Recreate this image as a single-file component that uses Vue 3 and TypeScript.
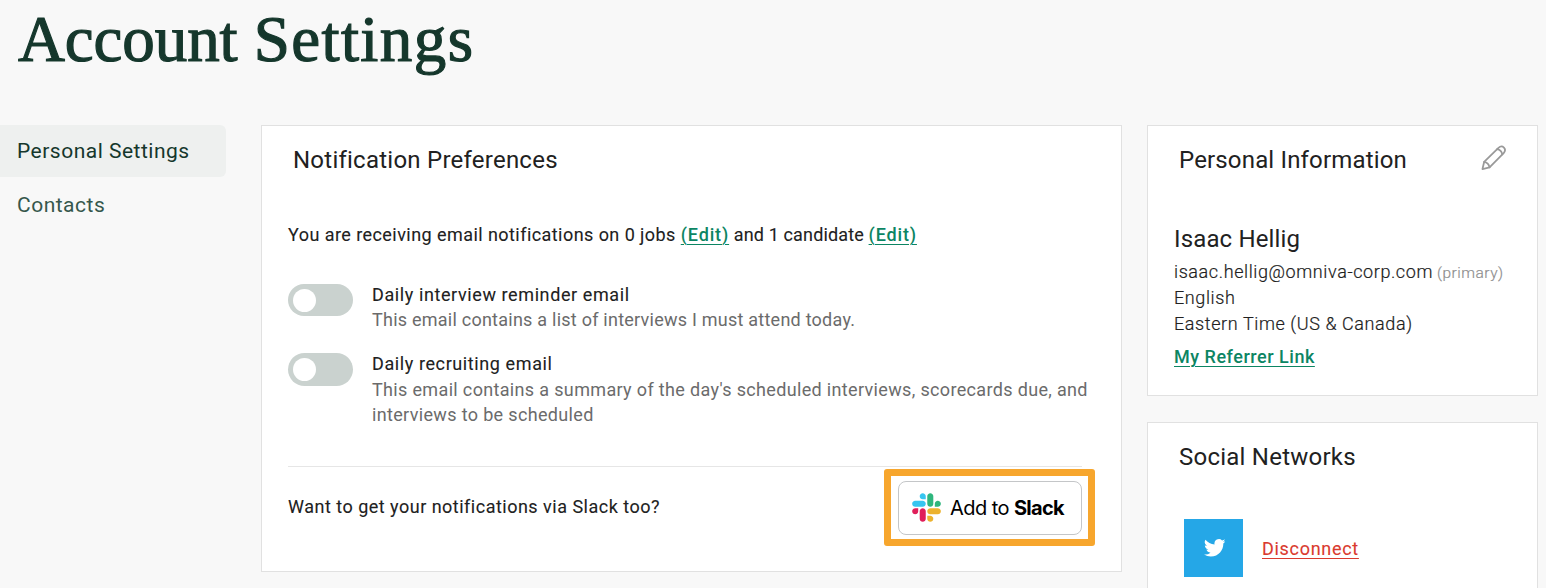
<script setup lang="ts">
interface NavItem {
  label: string
  active: boolean
  key: string
}

interface EmailToggle {
  key: string
  title: string
  lines: string[]
}

const navItems: NavItem[] = [
  { label: 'Personal Settings', active: true, key: 'personal' },
  { label: 'Contacts', active: false, key: 'contacts' },
]

const toggles: EmailToggle[] = [
  {
    key: 'interview',
    title: 'Daily interview reminder email',
    lines: ['This email contains a list of interviews I must attend today.'],
  },
  {
    key: 'recruiting',
    title: 'Daily recruiting email',
    lines: [
      "This email contains a summary of the day's scheduled interviews, scorecards due, and",
      'interviews to be scheduled',
    ],
  },
]
</script>

<template>
  <div class="page">
    <header class="page-header">
      <h1>Account <span class="wide">Settings</span></h1>
    </header>
    <div class="columns">
      <nav class="sidebar">
        <a v-for="item in navItems" :key="item.key" class="nav-item" :class="{ active: item.active }">{{ item.label }}</a>
      </nav>

      <section class="card main-card">
        <h2>Notification Preferences</h2>
        <p class="summary">You are receiving email notifications on 0 jobs <a class="link">(Edit)</a><span class="tight"> and 1 candidate </span><a class="link">(Edit)</a></p>
        <div v-for="t in toggles" :key="t.key" class="toggle-row" :class="t.key">
          <span class="switch"><span class="knob"></span></span>
          <div class="toggle-text">
            <div class="toggle-title">{{ t.title }}</div>
            <div v-for="(line, i) in t.lines" :key="i" class="toggle-desc">{{ line }}</div>
          </div>
        </div>
        <div class="slack-row">
          <span class="slack-q">Want to get your notifications via Slack too?</span>
          <div class="highlight">
            <button class="slack-btn">
              <svg class="slack-logo" viewBox="0 0 127 127">
                <path fill="#e01e5a" d="M27.2 80c0 7.3-5.9 13.2-13.2 13.2C6.7 93.2.8 87.3.8 80c0-7.3 5.9-13.2 13.2-13.2h13.2V80zm6.6 0c0-7.3 5.9-13.2 13.2-13.2 7.3 0 13.2 5.9 13.2 13.2v33c0 7.3-5.9 13.2-13.2 13.2-7.3 0-13.2-5.9-13.2-13.2V80z" />
                <path fill="#36c5f0" d="M47 27c-7.3 0-13.2-5.9-13.2-13.2C33.8 6.5 39.7.6 47 .6c7.3 0 13.2 5.9 13.2 13.2V27H47zm0 6.7c7.3 0 13.2 5.9 13.2 13.2 0 7.3-5.9 13.2-13.2 13.2H13.9C6.6 60.1.7 54.2.7 46.9c0-7.3 5.9-13.2 13.2-13.2H47z" />
                <path fill="#2eb67d" d="M99.9 46.9c0-7.3 5.9-13.2 13.2-13.2 7.3 0 13.2 5.9 13.2 13.2 0 7.3-5.9 13.2-13.2 13.2H99.9V46.9zm-6.6 0c0 7.3-5.9 13.2-13.2 13.2-7.3 0-13.2-5.9-13.2-13.2V13.8C66.9 6.5 72.8.6 80.1.6c7.3 0 13.2 5.9 13.2 13.2v33.1z" />
                <path fill="#ecb22e" d="M80.1 99.8c7.3 0 13.2 5.9 13.2 13.2 0 7.3-5.9 13.2-13.2 13.2-7.3 0-13.2-5.9-13.2-13.2V99.8h13.2zm0-6.6c-7.3 0-13.2-5.9-13.2-13.2 0-7.3 5.9-13.2 13.2-13.2h33.1c7.3 0 13.2 5.9 13.2 13.2 0 7.3-5.9 13.2-13.2 13.2H80.1z" />
              </svg>
              <span class="slack-label"><span>Add to</span><b>Slack</b></span>
            </button>
          </div>
        </div>
      </section>

      <aside class="right-column">
        <section class="card info-card">
          <div class="card-head">
            <h2>Personal Information</h2>
            <svg class="pencil" viewBox="0 0 26 26" fill="none" stroke="#999" stroke-width="1.8" stroke-linejoin="round" stroke-linecap="round">
              <path d="M1.5 24.5 3.2 17.3 17.8 2.9Q20.8 .2 23.4 2.6 25.8 5.2 23.1 8.2L8.7 22.8Z" />
              <path d="M16.4 4.3C19.3 4.8 21.2 6.7 21.7 9.6M3.2 17.3C6.4 18 8 19.6 8.7 22.8" />
            </svg>
          </div>
          <h3 class="name">Isaac Hellig</h3>
          <div class="info-line">isaac.hellig@omniva-corp.com<span class="primary">(primary)</span></div>
          <div class="info-line">English</div>
          <div class="info-line">Eastern Time (US &amp; Canada)</div>
          <div class="referrer"><a class="link">My Referrer Link</a></div>
        </section>

        <section class="card social-card">
          <h2>Social Networks</h2>
          <div class="social-row">
            <span class="twitter">
              <svg viewBox="0 0 24 24" fill="#fff">
                <path d="M23.95 4.57a10 10 0 0 1-2.82.78 4.96 4.96 0 0 0 2.16-2.73c-.95.56-2 .96-3.13 1.19a4.92 4.92 0 0 0-8.38 4.48C7.69 8.1 4.07 6.13 1.64 3.16a4.92 4.92 0 0 0 1.52 6.57 4.9 4.9 0 0 1-2.23-.61v.06c0 2.39 1.7 4.38 3.95 4.83a5 5 0 0 1-2.21.08 4.94 4.94 0 0 0 4.6 3.42A9.87 9.87 0 0 1 0 19.54a13.99 13.99 0 0 0 7.55 2.21c9.05 0 14-7.5 14-13.98 0-.21 0-.42-.02-.63a9.94 9.94 0 0 0 2.42-2.57z" />
              </svg>
            </span>
            <a class="disconnect">Disconnect</a>
          </div>
        </section>
      </aside>
    </div>
  </div>
</template>

<style>
html,
body {
  margin: 0;
  height: 100%;
  overflow: hidden;
  background: #f8f8f8;
}
</style>

<style scoped>
.page {
  box-sizing: border-box;
  width: 1546px;
  height: 588px;
  overflow: hidden;
  background: #f8f8f8;
  color: #212121;
  font-family: Roboto, 'Liberation Sans', sans-serif;
  font-size: 18px;
  white-space: nowrap;
}
h1,
h2,
h3,
p {
  margin: 0;
  font-weight: 400;
}
.page-header {
  height: 125px;
  padding-left: 18px;
  box-sizing: border-box;
}
h1 {
  font-family: 'Liberation Serif', serif;
  font-size: 65px;
  line-height: 79px;
  letter-spacing: -0.1px;
  color: #15372c;
  -webkit-text-stroke: 1.2px #15372c;
}
h1 .wide {
  letter-spacing: 1.4px;
}
.columns {
  display: flex;
  align-items: flex-start;
}
.sidebar {
  width: 226px;
  margin-right: 35px;
}
.nav-item {
  display: block;
  box-sizing: border-box;
  height: 52px;
  line-height: 53px;
  padding-left: 17px;
  margin-bottom: 2px;
  font-size: 21px;
  letter-spacing: 0.5px;
  color: #35574c;
}
.nav-item.active {
  background: #eef0ef;
  color: #15372c;
  border-radius: 0 6px 6px 0;
}
.card {
  box-sizing: border-box;
  background: #fff;
  border: 1px solid #e1e1e1;
}
.main-card {
  width: 861px;
  height: 447px;
  padding: 19px 26px 0;
  margin-right: 25px;
}
h2 {
  font-size: 24px;
  line-height: 30px;
  letter-spacing: 0.24px;
  padding-left: 5px;
}
.info-card h2 {
  letter-spacing: 0.16px;
}
.summary {
  margin-top: 47px;
  line-height: 26px;
  letter-spacing: 0.44px;
}
.summary,
.toggle-title,
.slack-q,
.disconnect {
  -webkit-text-stroke: 0.1px currentColor;
}
.tight {
  letter-spacing: 0.15px;
}
.link {
  color: #0c8563;
  font-weight: 500;
  letter-spacing: 0.85px;
  text-decoration: underline;
  text-decoration-thickness: 1px;
  text-underline-offset: 3px;
  -webkit-text-stroke: 0;
}
.toggle-row {
  display: flex;
  line-height: 25.4px;
}
.toggle-row.interview {
  margin-top: 34px;
  height: 69px;
}
.toggle-row.recruiting {
  height: 115px;
}
.switch {
  box-sizing: border-box;
  width: 65px;
  height: 33px;
  margin: 2px 19px 0 0;
  padding: 5px;
  border-radius: 17px;
  background: #cad2cf;
}
.interview .switch {
  height: 32px;
  padding-top: 4.5px;
}
.knob {
  display: block;
  width: 23px;
  height: 23px;
  border-radius: 50%;
  background: #fff;
}
.toggle-title {
  letter-spacing: 0.6px;
}
.recruiting .toggle-title {
  line-height: 26px;
}
.toggle-desc {
  color: #6b6b6b;
  letter-spacing: 0.24px;
}
.recruiting .toggle-desc {
  letter-spacing: 0.34px;
}
.slack-row {
  display: flex;
  justify-content: space-between;
  width: 807px;
  height: 80px;
  background: linear-gradient(#e6e6e6, #e6e6e6) 0 0 / 794px 1px no-repeat;
}
.slack-q {
  line-height: 82px;
  letter-spacing: 0.49px;
}
.highlight {
  box-sizing: border-box;
  width: 211px;
  height: 77px;
  margin-top: 3px;
  padding: 4.5px 6px 4px 7px;
  border: 7px solid #f7a62d;
  border-radius: 3px;
  background: #fff;
}
.slack-btn {
  box-sizing: border-box;
  display: flex;
  align-items: center;
  width: 184px;
  height: 54px;
  padding: 0 0 0 13px;
  border: 1px solid #c4c6c8;
  border-radius: 8px;
  background: #fff;
  color: #000;
}
.slack-logo {
  width: 29px;
  height: 29px;
  margin-right: 9px;
}
.slack-label {
  display: flex;
  gap: 5px;
  padding-top: 1px;
  font: 400 20px/28px Inter, sans-serif;
  letter-spacing: -0.55px;
}
.slack-label b {
  font-weight: 700;
  letter-spacing: -0.7px;
}
.right-column {
  width: 391px;
}
.info-card {
  height: 271px;
  padding: 19px 26px 0;
  margin-bottom: 26px;
}
.card-head {
  display: flex;
  justify-content: space-between;
}
.pencil {
  width: 25.5px;
  height: 25.5px;
  margin-right: 5px;
}
.name {
  margin-top: 49px;
  font-size: 24px;
  line-height: 30px;
  letter-spacing: 0.15px;
}
.info-line {
  line-height: 26px;
  height: 26px;
  letter-spacing: 0.6px;
  font-weight: 300;
  -webkit-text-stroke: 0.2px currentColor;
}
.name + .info-line {
  margin-top: 5px;
}
.primary {
  margin-left: 4px;
  font-size: 15.5px;
  letter-spacing: 0.5px;
  color: #8e8e8e;
}
.referrer {
  margin-top: 7px;
  line-height: 26px;
}
.referrer .link {
  letter-spacing: 0.52px;
}
.social-card {
  height: 190px;
  padding: 19px 26px 0;
}
.social-row {
  display: flex;
  align-items: center;
  margin: 47px 0 0 10px;
}
.twitter {
  display: flex;
  align-items: center;
  justify-content: center;
  width: 59px;
  height: 58px;
  margin-right: 19px;
  background: #25a7e7;
}
.twitter svg {
  width: 21.5px;
  height: 21.5px;
  margin-left: 1.5px;
}
.disconnect {
  color: #da3a2e;
  text-decoration: underline;
  text-decoration-thickness: 1px;
  text-underline-offset: 3px;
  letter-spacing: 0.7px;
}
</style>
